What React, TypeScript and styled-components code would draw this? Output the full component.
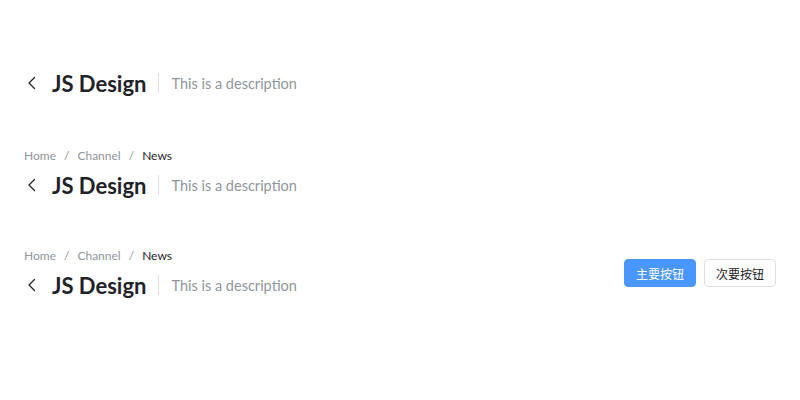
import styled, { createGlobalStyle } from "styled-components";

const GlobalStyle = createGlobalStyle`
  body {
    margin: 0;
    background: #ffffff;
    font-family: Lato, "Noto Sans CJK SC", sans-serif;
  }
`;

const Page = styled.div`
  display: flex;
  flex-direction: column;
  gap: 44px;
  padding: 67px 24px 0;
`;

const Block = styled.div<{ $first?: boolean }>`
  display: flex;
  align-items: center;
  justify-content: space-between;
  margin-bottom: ${(p) => (p.$first ? "2px" : "0")};
`;

const Left = styled.div`
  display: flex;
  flex-direction: column;
  gap: 4px;
`;

const Crumbs = styled.div`
  display: flex;
  align-items: center;
  height: 20px;
  font-size: 12px;
  color: #8f959e;
`;

const Crumb = styled.span<{ $current?: boolean }>`
  color: ${(p) => (p.$current ? "#1f2329" : "#8f959e")};
`;

const Sep = styled.span`
  margin: 0 8px;
  color: #8f959e;
`;

const Header = styled.div`
  display: flex;
  align-items: center;
  height: 32px;
`;

const Back = styled.button`
  display: flex;
  align-items: center;
  justify-content: center;
  width: 16px;
  height: 16px;
  padding: 0;
  margin: 0 12px 0 0;
  border: none;
  background: none;
  cursor: pointer;
`;

const Title = styled.h1`
  margin: 0;
  font-size: 22px;
  font-weight: 700;
  color: #1f2329;
`;

const Divider = styled.span`
  width: 1px;
  height: 20px;
  background: #dee0e3;
  margin: 0 12px;
`;

const Desc = styled.span`
  font-size: 14.5px;
  color: #8f959e;
`;

const Actions = styled.div`
  display: flex;
  gap: 8px;
`;

const Btn = styled.button<{ $primary?: boolean }>`
  height: 28px;
  padding: 0 11px;
  border-radius: 4px;
  font-family: "Noto Sans CJK SC", sans-serif;
  font-size: 12px;
  cursor: pointer;
  border: 1px solid ${(p) => (p.$primary ? "#4996ff" : "#dee0e3")};
  background: ${(p) => (p.$primary ? "#4996ff" : "#ffffff")};
  color: ${(p) => (p.$primary ? "#ffffff" : "#1f2329")};
`;

const ChevronLeft = () => (
  <svg width="16" height="16" viewBox="0 0 16 16" fill="none">
    <path d="M10.5 2.5L5 8l5.5 5.5" stroke="#1f2329" strokeWidth="1.3" strokeLinecap="round" strokeLinejoin="round" />
  </svg>
);

const HeaderRow = () => (
  <Header>
    <Back>
      <ChevronLeft />
    </Back>
    <Title>JS Design</Title>
    <Divider />
    <Desc>This is a description</Desc>
  </Header>
);

const Breadcrumb = () => (
  <Crumbs>
    <Crumb>Home</Crumb>
    <Sep>/</Sep>
    <Crumb>Channel</Crumb>
    <Sep>/</Sep>
    <Crumb $current>News</Crumb>
  </Crumbs>
);

export default function App() {
  return (
    <>
      <GlobalStyle />
      <Page>
        <Block $first>
          <HeaderRow />
        </Block>
        <Block>
          <Left>
            <Breadcrumb />
            <HeaderRow />
          </Left>
        </Block>
        <Block>
          <Left>
            <Breadcrumb />
            <HeaderRow />
          </Left>
          <Actions>
            <Btn $primary>主要按钮</Btn>
            <Btn>次要按钮</Btn>
          </Actions>
        </Block>
      </Page>
    </>
  );
}
